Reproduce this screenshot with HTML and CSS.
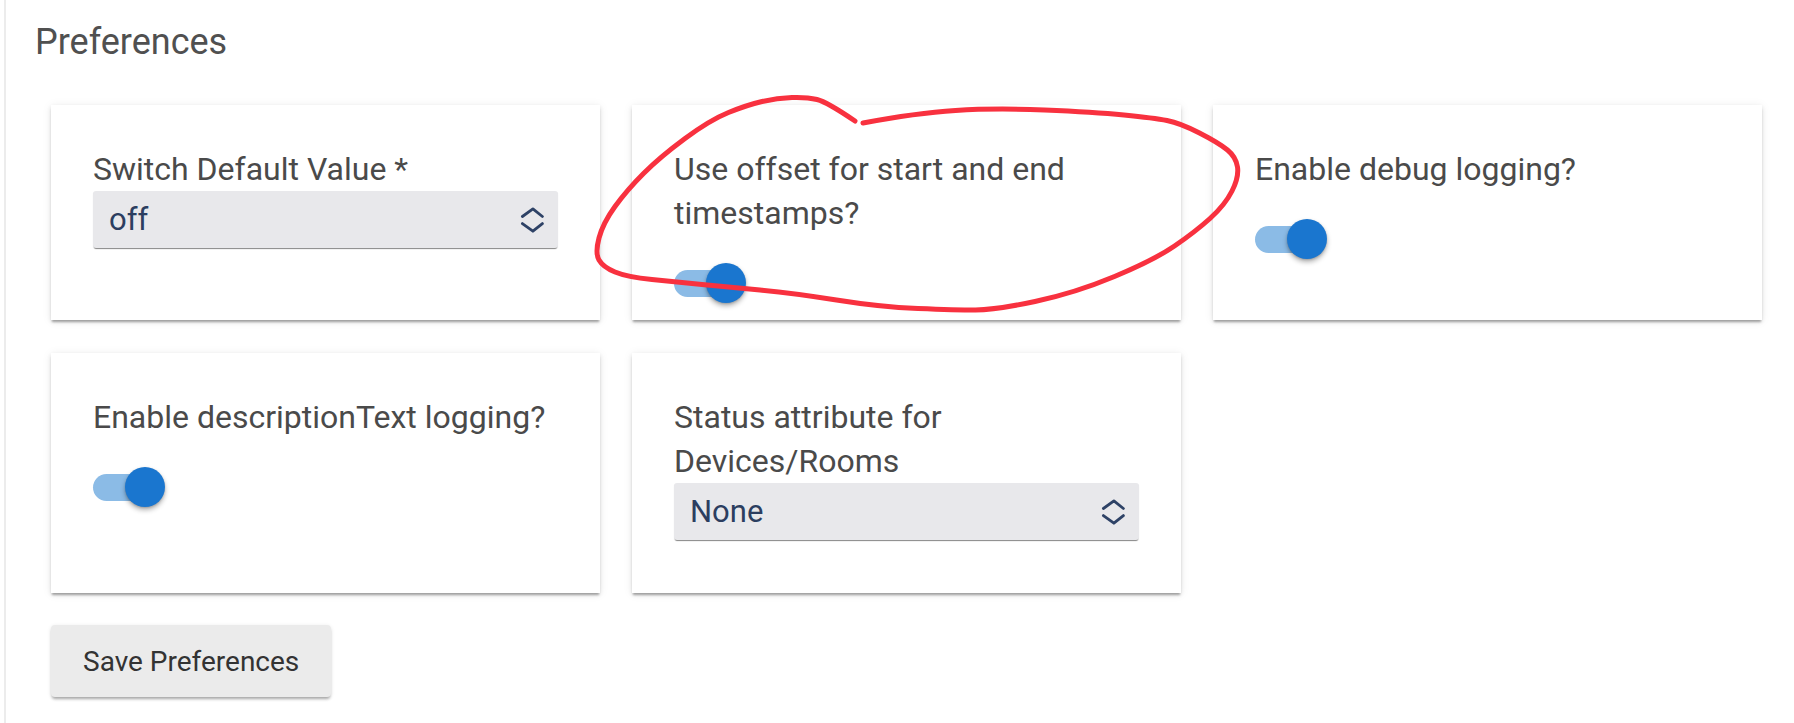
FILE: index.html
```html
<!DOCTYPE html>
<html lang="en">
<head>
<meta charset="utf-8">
<title>Preferences</title>
<link rel="stylesheet" href="styles.css">
</head>
<body>
<div class="panel">
  <h1 class="title">Preferences</h1>
  <div class="prefs">
    <div class="grid">
      <div class="card">
        <div class="label">Switch Default Value *</div>
        <div class="select">
          <span>off</span>
          <svg class="chev" width="24" height="28" viewBox="0 0 24 28"><path d="M2.4 10.5 L12.9 2.9 L22.4 10.5 M2.4 17.6 L12.9 25.2 L22.4 17.6" fill="none" stroke="#2e4266" stroke-width="2.8" stroke-linecap="round" stroke-linejoin="round"/></svg>
        </div>
      </div>
      <div class="card">
        <div class="label">Use offset for start and end timestamps?</div>
        <div class="switch"><span class="track"></span><span class="thumb"></span></div>
      </div>
      <div class="card">
        <div class="label">Enable debug logging?</div>
        <div class="switch"><span class="track"></span><span class="thumb"></span></div>
      </div>
      <div class="card">
        <div class="label">Enable descriptionText logging?</div>
        <div class="switch"><span class="track"></span><span class="thumb"></span></div>
      </div>
      <div class="card">
        <div class="label">Status attribute for Devices/Rooms</div>
        <div class="select">
          <span>None</span>
          <svg class="chev" width="24" height="28" viewBox="0 0 24 28"><path d="M2.4 10.5 L12.9 2.9 L22.4 10.5 M2.4 17.6 L12.9 25.2 L22.4 17.6" fill="none" stroke="#2e4266" stroke-width="2.8" stroke-linecap="round" stroke-linejoin="round"/></svg>
        </div>
      </div>
    </div>
    <div class="actions">
      <button class="btn" type="button">Save Preferences</button>
    </div>
  </div>
</div>
<svg class="annotation" width="1794" height="723" viewBox="0 0 1794 723">
  <path d="M 855 121 Q 827 102 817 99.5 Q 807 97 792 97.5 Q 777 98 762 101.5 Q 747 105 728.5 112.5 Q 710 120 685 138.5 Q 660 157 643.5 173.5 Q 627 190 615 206.5 Q 603 223 599 238 Q 595 253 599 260 Q 603 267 615 272 Q 627 277 652 279.5 Q 677 282 702 284.5 Q 727 287 760 290 Q 793 293 836.5 300 Q 880 307 918 308.5 Q 956 310 975.5 310 Q 995 310 1035 301.5 Q 1075 293 1114.5 276.5 Q 1154 260 1174.5 246 Q 1195 232 1210 218.5 Q 1225 205 1232 191 Q 1239 177 1237.5 167 Q 1236 157 1227.5 150 Q 1219 143 1199.5 133 Q 1180 123 1167 120.5 Q 1154 118 1124 115 Q 1094 112 1044.5 110 Q 995 108 955.5 110.5 Q 916 113 863 123" fill="none" stroke="#f8313f" stroke-width="5" stroke-linecap="round" stroke-linejoin="round"/>
</svg>
</body>
</html>
```
FILE: styles.css
```css
html, body {
  margin: 0;
  padding: 0;
  background: #ffffff;
}

body {
  position: relative;
  font-family: Roboto, "Noto Sans", "Liberation Sans", sans-serif;
  overflow: hidden;
}

.panel {
  box-sizing: border-box;
  min-height: 723px;
  margin-left: 4px;
  border-left: 2px solid #ececec;
  padding: 20px 0 0 29px;
}

.title {
  margin: 0;
  font-size: 36px;
  line-height: 44px;
  font-weight: 400;
  color: #505050;
}

.prefs {
  margin-top: 41px;
  padding-left: 16px;
}

.grid {
  display: grid;
  grid-template-columns: repeat(3, 549px);
  column-gap: 32px;
  row-gap: 33px;
}

.card {
  background: #ffffff;
  padding: 42px 42px 17px;
  box-shadow: 0 3px 2px -1px rgba(0, 0, 0, 0.28), 0 2px 4px rgba(0, 0, 0, 0.12), 0 1px 10px rgba(0, 0, 0, 0.07);
}

.label {
  font-size: 32px;
  line-height: 44px;
  color: #4a4a4a;
}

.select {
  box-sizing: border-box;
  height: 57px;
  margin-bottom: 36px;
  display: flex;
  align-items: center;
  justify-content: space-between;
  padding: 0 14px 0 16px;
  background: #e8e8eb;
  border-radius: 3px;
  box-shadow: 0 2px 1px -1px rgba(0, 0, 0, 0.4), 0 1px 1px rgba(0, 0, 0, 0.12);
  font-size: 31px;
  color: #2c3e60;
}

.chev {
  display: block;
  flex: none;
}

.switch {
  display: flex;
  align-items: center;
  height: 40px;
  margin-top: 28px;
}

.track {
  display: block;
  width: 58px;
  height: 27px;
  border-radius: 14px;
  background: #8bbbe6;
}

.thumb {
  display: block;
  width: 40px;
  height: 40px;
  border-radius: 50%;
  margin-left: -26px;
  background: #1a76cf;
  box-shadow: 0 3px 5px rgba(0, 0, 0, 0.3), 0 1px 2px rgba(0, 0, 0, 0.15);
}

.actions {
  margin-top: 32px;
}

.btn {
  height: 72px;
  padding: 0 32px;
  border: 0;
  border-radius: 4px;
  background: #ebebeb;
  color: #333333;
  font-family: Roboto, "Noto Sans", "Liberation Sans", sans-serif;
  font-size: 28px;
  box-shadow: 0 3px 3px -1px rgba(0, 0, 0, 0.3), 0 1px 4px rgba(0, 0, 0, 0.1);
}

.annotation {
  position: absolute;
  left: 0;
  top: 0;
  pointer-events: none;
}
```
